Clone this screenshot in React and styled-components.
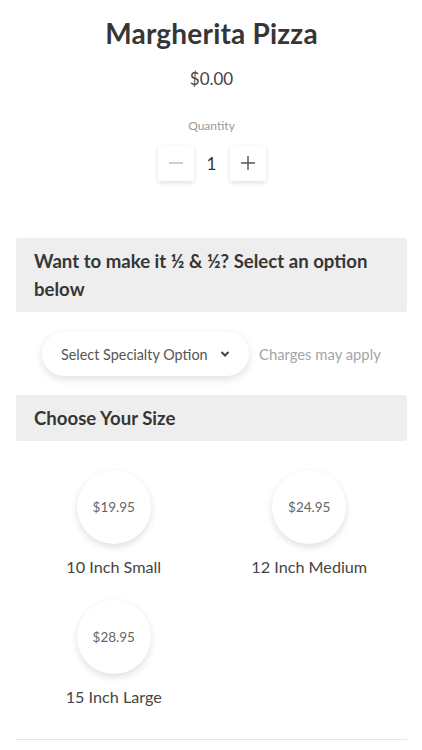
import React from 'react'
import styled, { createGlobalStyle } from 'styled-components'

const GlobalStyle = createGlobalStyle`
  body {
    margin: 0;
    background: #fff;
    font-family: Lato, "Open Sans", "Liberation Sans", sans-serif;
    color: #333;
  }
`

const sizes = [
  { id: 1, price: '$19.95', label: '10 Inch Small' },
  { id: 2, price: '$24.95', label: '12 Inch Medium' },
  { id: 3, price: '$28.95', label: '15 Inch Large' },
]

const App = () => {
  return (
    <Wrapper>
      <GlobalStyle />
      <Title>Margherita Pizza</Title>
      <Price>$0.00</Price>
      <QtyLabel>Quantity</QtyLabel>
      <QtyRow>
        <QtyButton type="button">
          <svg width="16" height="16" viewBox="0 0 16 16">
            <path d="M1 8h14" stroke="#bbb" strokeWidth="1.4" />
          </svg>
        </QtyButton>
        <QtyValue>1</QtyValue>
        <QtyButton type="button">
          <svg width="16" height="16" viewBox="0 0 16 16">
            <path d="M1 8h14M8 1v14" stroke="#555" strokeWidth="1.4" />
          </svg>
        </QtyButton>
      </QtyRow>

      <Band $top={57}>
        Want to make it ½ &amp; ½? Select an option below
      </Band>
      <SelectRow>
        <SelectPill type="button">
          Select Specialty Option
          <svg width="10" height="8" viewBox="0 0 10 8">
            <path
              d="M1.5 2l3.5 3.5L8.5 2"
              fill="none"
              stroke="#444"
              strokeWidth="2"
            />
          </svg>
        </SelectPill>
        <Note>Charges may apply</Note>
      </SelectRow>

      <Band $top={19}>Choose Your Size</Band>
      <SizeGrid>
        {sizes.map((size) => {
          return (
            <SizeItem key={size.id}>
              <Circle>{size.price}</Circle>
              <SizeLabel>{size.label}</SizeLabel>
            </SizeItem>
          )
        })}
      </SizeGrid>
      <Divider />
    </Wrapper>
  )
}

const Wrapper = styled.main`
  display: flex;
  flex-direction: column;
  align-items: center;
  padding: 15px 15px 0 16px;
`

const Title = styled.h1`
  margin: 0;
  font-size: 28px;
  line-height: 36px;
  font-weight: 700;
  color: #363636;
  letter-spacing: 0.2px;
`

const Price = styled.div`
  margin-top: 16px;
  font-size: 17px;
  line-height: 24px;
  color: #444;
`

const QtyLabel = styled.div`
  margin-top: 28px;
  font-size: 12px;
  line-height: 14px;
  color: #9a9a9a;
`

const QtyRow = styled.div`
  margin-top: 12px;
  display: flex;
  align-items: center;
`

const QtyButton = styled.button`
  width: 36px;
  height: 36px;
  padding: 0;
  border: none;
  border-radius: 3px;
  background: #fff;
  box-shadow: 0 2px 5px rgba(0, 0, 0, 0.12);
  display: flex;
  align-items: center;
  justify-content: center;
`

const QtyValue = styled.span`
  width: 36px;
  text-align: center;
  font-size: 17px;
  color: #333;
`

const Band = styled.h2`
  align-self: stretch;
  margin: ${(p) => p.$top}px 0 0;
  padding: 9px 18px;
  background: #eeeeee;
  font-size: 18.6px;
  line-height: 28px;
  font-weight: 700;
  color: #363636;
  border-radius: 2px;
`

const SelectRow = styled.div`
  align-self: stretch;
  margin-top: 20px;
  padding-left: 26px;
  display: flex;
  align-items: center;
  gap: 10px;
`

const SelectPill = styled.button`
  height: 44px;
  width: 207px;
  padding: 0 19px;
  border: none;
  border-radius: 22px;
  background: #fff;
  box-shadow: 0 3px 8px rgba(0, 0, 0, 0.13);
  display: flex;
  align-items: center;
  justify-content: space-between;
  font-family: inherit;
  font-size: 14.4px;
  color: #555;
`

const Note = styled.span`
  font-size: 14.8px;
  color: #a5a5a5;
`

const SizeGrid = styled.div`
  align-self: stretch;
  margin-top: 29px;
  display: grid;
  grid-template-columns: 1fr 1fr;
  row-gap: 23px;
`

const SizeItem = styled.div`
  display: flex;
  flex-direction: column;
  align-items: center;
`

const Circle = styled.div`
  width: 74px;
  height: 74px;
  border-radius: 50%;
  background: #fff;
  box-shadow: 0 3px 7px rgba(0, 0, 0, 0.13);
  display: flex;
  align-items: center;
  justify-content: center;
  font-size: 13.5px;
  color: #666;
`

const SizeLabel = styled.div`
  margin-top: 13px;
  font-size: 16.2px;
  line-height: 20px;
  color: #444;
`

const Divider = styled.hr`
  align-self: stretch;
  margin: 32px 0 0;
  border: none;
  border-top: 1px solid #e6e6e6;
`

export default App
